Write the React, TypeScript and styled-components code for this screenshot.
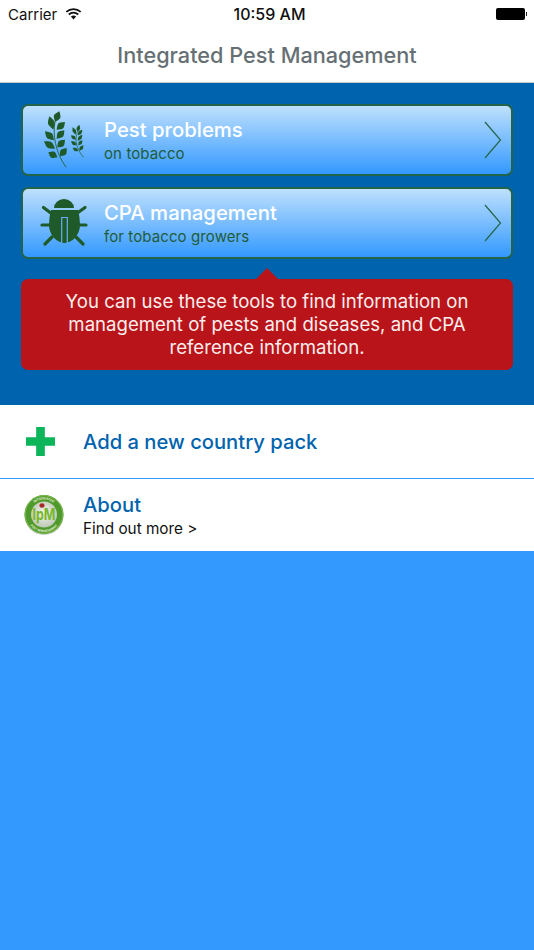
import styled, { createGlobalStyle } from 'styled-components';

const GlobalStyle = createGlobalStyle`
  html, body {
    margin: 0;
    padding: 0;
    background: #3399ff;
    font-family: Inter, "Liberation Sans", sans-serif;
  }
`;

const Screen = styled.div`
  width: 534px;
  min-height: 950px;
  background: #3399ff;
  display: flex;
  flex-direction: column;
`;

const Header = styled.header`
  height: 83px;
  box-sizing: border-box;
  background: #fff;
  border-bottom: 1px solid #c4ccd0;
  display: flex;
  flex-direction: column;
`;

const StatusBar = styled.div`
  height: 28px;
  display: grid;
  grid-template-columns: 1fr auto 1fr;
  align-items: center;
  padding: 0 8px;
  font-size: 15px;
  color: #111;
`;

const Carrier = styled.div`
  display: flex;
  align-items: center;
  gap: 8px;
`;

const Clock = styled.div`
  font-size: 16px;
  font-weight: 500;
  margin-left: 5px;
`;

const Battery = styled.div`
  justify-self: end;
  width: 29px;
  height: 12px;
  border-radius: 2px;
  background: #000;
  position: relative;
  margin-right: 1px;
  &::after {
    content: '';
    position: absolute;
    right: -2px;
    top: 4px;
    width: 1px;
    height: 4px;
    background: #222;
  }
`;

const Title = styled.h1`
  margin: 0;
  flex: 1;
  display: flex;
  align-items: center;
  justify-content: center;
  padding-bottom: 1px;
  font-size: 21.7px;
  font-weight: 500;
  color: #667074;
`;

const Panel = styled.section`
  height: 322px;
  box-sizing: border-box;
  background: #0063ae;
  padding: 21px 21px 0 21px;
  display: flex;
  flex-direction: column;
  gap: 11px;
`;

const ToolButton = styled.div`
  height: 72px;
  box-sizing: border-box;
  border: 2px solid #24644a;
  border-radius: 7px;
  background: linear-gradient(#bfe0fd, #3399ff);
  display: flex;
  align-items: center;
`;

const IconSlot = styled.div`
  width: 81px;
  flex: none;
  display: flex;
  align-items: center;
  justify-content: center;
  padding-left: 3px;
  box-sizing: border-box;
`;

const ButtonText = styled.div`
  flex: 1;
  display: flex;
  flex-direction: column;
  gap: 1px;
`;

const ButtonTitle = styled.div`
  font-size: 20.3px;
  line-height: 26px;
  font-weight: 500;
  color: #fff;
`;

const ButtonSub = styled.div`
  font-size: 15px;
  line-height: 19px;
  letter-spacing: 0.1px;
  color: #1f5c3c;
`;

const Chevron = styled.svg`
  flex: none;
  margin-right: 9px;
`;

const Tip = styled.div`
  margin-top: 9px;
  background: #b81419;
  border-radius: 7px;
  height: 91px;
  box-sizing: border-box;
  padding-top: 11px;
  color: #fbeeee;
  font-size: 18.6px;
  line-height: 23px;
  text-align: center;
  position: relative;
  &::before {
    content: '';
    position: absolute;
    top: -11px;
    left: 50%;
    margin-left: -11px;
    border-left: 11px solid transparent;
    border-right: 11px solid transparent;
    border-bottom: 11px solid #b81419;
  }
`;

const Row = styled.div<{ $divider?: boolean; $height: number }>`
  height: ${p => p.$height}px;
  box-sizing: border-box;
  background: #fff;
  display: flex;
  align-items: center;
  border-bottom: ${p => (p.$divider ? '1px solid #3399ff' : 'none')};
`;

const RowIcon = styled.div<{ $left: number }>`
  width: 83px;
  flex: none;
  display: flex;
  justify-content: flex-start;
  padding-left: ${p => p.$left}px;
  box-sizing: border-box;
`;

const RowText = styled.div`
  display: flex;
  flex-direction: column;
`;

const RowTitle = styled.div`
  font-size: 20.2px;
  line-height: 26px;
  font-weight: 500;
  color: #0063ae;
`;

const RowSub = styled.div`
  font-size: 15.3px;
  line-height: 21px;
  color: #111;
`;

const Wifi = () => (
  <svg width="17" height="12" viewBox="0 0 16 12">
    <path d="M8 11.5 5.4 8.6a3.9 3.9 0 0 1 5.2 0Z" fill="#111" />
    <path d="M3.3 6.5a7 7 0 0 1 9.4 0" stroke="#111" strokeWidth="1.7" fill="none" />
    <path d="M0.8 3.8a10.8 10.8 0 0 1 14.4 0" stroke="#111" strokeWidth="1.7" fill="none" />
  </svg>
);

// base and tip of a leaf, w sets how fat it is
type Leaf = [number, number, number, number];

const leafPath = ([x1, y1, x2, y2]: Leaf, w: number) => {
  const mx = (x1 + x2) / 2;
  const my = (y1 + y2) / 2;
  const len = Math.hypot(x2 - x1, y2 - y1);
  const nx = (-(y2 - y1) / len) * w;
  const ny = ((x2 - x1) / len) * w;
  return `M${x1} ${y1}C${mx + nx} ${my + ny} ${mx + nx} ${my + ny} ${x2} ${y2}C${mx - nx} ${my - ny} ${mx - nx} ${my - ny} ${x1} ${y1}Z`;
};

const bigLeaves: Leaf[] = [
  [45, 42, 58, 10],
  [40, 65, 28, 25],
  [50, 65, 75, 42],
  [42, 97, 15, 70],
  [50, 92, 73, 67],
  [45, 122, 12, 100],
  [52, 118, 75, 95],
  [52, 148, 25, 133],
  [60, 145, 80, 120],
];

const smallLeaves: Leaf[] = [
  [112, 72, 118, 50],
  [108, 80, 98, 58],
  [113, 82, 127, 65],
  [108, 95, 93, 82],
  [113, 98, 127, 80],
  [110, 112, 93, 100],
  [115, 112, 127, 97],
  [115, 129, 98, 120],
  [118, 128, 130, 112],
];

const PlantIcon = () => (
  <svg width="50" height="62" viewBox="0 3 150 186" fill="#1f5a2a">
    <path d="M45 42C38 80 45 130 78 178" stroke="#1f5a2a" strokeWidth="2.5" fill="none" />
    <path d="M112 72C104 95 108 120 130 148" stroke="#1f5a2a" strokeWidth="2" fill="none" />
    {bigLeaves.map((l, i) => (
      <path key={i} d={leafPath(l, 13.5)} />
    ))}
    {smallLeaves.map((l, i) => (
      <path key={i} d={leafPath(l, 7)} />
    ))}
  </svg>
);

const BugIcon = () => (
  <svg width="50" height="50" viewBox="1 1 50 50" fill="#1f5a2a">
    <path d="M15 11a10 9 0 0 1 20 0Z" />
    <path d="M12 13H39Q41 20 41 28C41 38 33 46 25.5 46C18 46 10 38 10 28Q10 20 12 13Z" />
    <path d="M22.7 46V20.5H28.3V46" stroke="#6aaef5" strokeWidth="1.2" fill="none" />
    <g stroke="#1f5a2a" strokeWidth="3.2" strokeLinecap="round" fill="none">
      <path d="M4.5 10.5 13 17" />
      <path d="M46 10.5 37 17" />
      <path d="M3 28H12" />
      <path d="M47 28H38" />
      <path d="M6 47 13 40" />
      <path d="M44 47 37 40" />
    </g>
  </svg>
);

const PlusIcon = () => (
  <svg width="29" height="29" viewBox="0 0 30 30">
    <path d="M10.5 0h9v10.5H30v9H19.5V30h-9V19.5H0v-9h10.5Z" fill="#0db55a" />
  </svg>
);

const IpmBadge = () => (
  <svg width="40" height="42" viewBox="0 0 40 42">
    <defs>
      <radialGradient id="ipmFace" cx="0.5" cy="0.45" r="0.6">
        <stop offset="0" stopColor="#f4f5ef" />
        <stop offset="1" stopColor="#b9c4ae" />
      </radialGradient>
      <path id="ipmTop" d="M5 20.5a15 15 0 0 1 30 0" />
      <path id="ipmBottom" d="M2.5 20.5a17.5 17.5 0 0 0 35 0" />
    </defs>
    <circle cx="20" cy="21.5" r="19.5" fill="#9a9f98" opacity="0.55" />
    <circle cx="20" cy="20.5" r="19.5" fill="#4f9a2b" />
    <circle cx="20" cy="20.5" r="18.8" fill="none" stroke="#8cc45a" strokeWidth="0.8" />
    <text fontFamily="Inter, sans-serif" fontSize="3.2" fontWeight="700" fill="#e3f0d2">
      <textPath href="#ipmTop" startOffset="50%" textAnchor="middle">
        INTEGRATED
      </textPath>
    </text>
    <text fontFamily="Inter, sans-serif" fontSize="3" fontWeight="700" fill="#e3f0d2">
      <textPath href="#ipmBottom" startOffset="50%" textAnchor="middle">
        PEST MANAGEMENT
      </textPath>
    </text>
    <circle cx="20" cy="20.5" r="13" fill="url(#ipmFace)" />
    <ellipse cx="18" cy="11.5" rx="2.6" ry="2.2" fill="#a62a2a" />
    <text
      transform="translate(20 25.5) scale(0.78 1)"
      textAnchor="middle"
      fontFamily="Inter, sans-serif"
      fontSize="16"
      fontWeight="700"
      fill="#78b82c"
    >
      IpM
    </text>
  </svg>
);

const ChevronIcon = () => (
  <Chevron width="18" height="38" viewBox="0 0 18 38">
    <path d="M1 1 16.5 19 1 37" stroke="#24644a" strokeWidth="1.2" fill="none" />
  </Chevron>
);

export default function App() {
  return (
    <Screen>
      <GlobalStyle />
      <Header>
        <StatusBar>
          <Carrier>
            Carrier <Wifi />
          </Carrier>
          <Clock>10:59 AM</Clock>
          <Battery />
        </StatusBar>
        <Title>Integrated Pest Management</Title>
      </Header>
      <Panel>
        <ToolButton>
          <IconSlot>
            <PlantIcon />
          </IconSlot>
          <ButtonText>
            <ButtonTitle>Pest problems</ButtonTitle>
            <ButtonSub>on tobacco</ButtonSub>
          </ButtonText>
          <ChevronIcon />
        </ToolButton>
        <ToolButton>
          <IconSlot>
            <BugIcon />
          </IconSlot>
          <ButtonText>
            <ButtonTitle>CPA management</ButtonTitle>
            <ButtonSub>for tobacco growers</ButtonSub>
          </ButtonText>
          <ChevronIcon />
        </ToolButton>
        <Tip>
          You can use these tools to find information on
          <br />
          management of pests and diseases, and CPA
          <br />
          reference information.
        </Tip>
      </Panel>
      <Row $divider $height={74}>
        <RowIcon $left={26}>
          <PlusIcon />
        </RowIcon>
        <RowText>
          <RowTitle>Add a new country pack</RowTitle>
        </RowText>
      </Row>
      <Row $height={72}>
        <RowIcon $left={24}>
          <IpmBadge />
        </RowIcon>
        <RowText>
          <RowTitle>About</RowTitle>
          <RowSub>Find out more &gt;</RowSub>
        </RowText>
      </Row>
    </Screen>
  );
}
